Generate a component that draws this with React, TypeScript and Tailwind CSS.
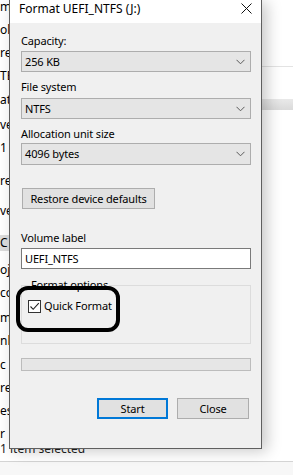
import React from "react";

const font = { fontFamily: '"Noto Sans", "Open Sans", sans-serif' };

function Chevron() {
  return (
    <svg width="9" height="6" viewBox="0 0 9 6" className="shrink-0">
      <polyline points="0.5,0.8 4.5,4.8 8.5,0.8" fill="none" stroke="#5a5a5a" strokeWidth="1" />
    </svg>
  );
}

const txt = "text-[11px] leading-[16px] tracking-[-0.15px] text-black";

function Select({ value, h = "h-[21px]" }: { value: string; h?: string }) {
  return (
    <div className={h + " border border-[#adadad] bg-[#e5e5e5] flex items-center justify-between pl-[3px] pr-[5px]"}>
      <span className={txt}>{value}</span>
      <Chevron />
    </div>
  );
}

function Label({ children, className = "" }: { children: React.ReactNode; className?: string }) {
  return <div className={txt + " h-[16px] " + className}>{children}</div>;
}

const leftRows: { t: string; cls: string; hl?: boolean }[] = [
  { t: "mages", cls: "mt-[-1px]" },
  { t: "olicies", cls: "mt-[7px]" },
  { t: "resources", cls: "mt-[7px]" },
  { t: "TEAM", cls: "mt-[7px]" },
  { t: "ata", cls: "mt-[8px]" },
  { t: "ve", cls: "mt-[9px]" },
  { t: "1", cls: "mt-[7px]" },
  { t: "re", cls: "mt-[17px]" },
  { t: "ve", cls: "mt-[14px]" },
  { t: "C", cls: "mt-[16px]", hl: true },
  { t: "ojects", cls: "mt-[11px]" },
  { t: "co", cls: "mt-[7px]" },
  { t: "m", cls: "mt-[9px]" },
  { t: "nloads", cls: "mt-[7px]" },
  { t: "c", cls: "mt-[8px]" },
  { t: "re", cls: "mt-[7px]" },
  { t: "es", cls: "mt-[7px]" },
  { t: "r", cls: "mt-[7px]" },
];

export default function App() {
  return (
    <div className="relative w-[293px] h-[475px] overflow-hidden bg-white" style={font}>
      {/* Explorer window behind */}
      <div className="flex flex-col w-[293px] h-[475px]">
        <div className="flex flex-1">
          <div className="flex flex-col">
            <div className="w-[9px] overflow-hidden flex flex-col text-[12px] leading-[16px] text-black">
              {leftRows.map((r, i) => (
                <div key={i} className={"h-[16px] whitespace-nowrap " + r.cls + (r.hl ? " bg-[#dcdcdc]" : "")}>
                  {r.t}
                </div>
              ))}
            </div>
            <div className="h-[16px] mt-[-1px] whitespace-nowrap text-[12px] leading-[16px] text-[#222]">1 item selected</div>
          </div>
          <div className="flex-1 flex flex-col">
            <div className="h-[66px]" />
            <div className="h-px bg-[#e3e3e3]" />
            <div className="h-[32px]" />
            <div className="h-[11px] bg-gradient-to-b from-[#e9e9e9] to-[#dadada]" />
            <div className="pl-[252px] text-[12px] leading-[14px] text-[#444]">b</div>
          </div>
        </div>
        <div className="h-px bg-[#d4d4d4]" />
        <div className="h-[13px] bg-[#f7f7f7]" />
      </div>

      {/* Format dialog */}
      <div className="absolute left-[9px] top-0 w-[253px] h-[449px] bg-[#f0f0f0] border-x border-b border-[#5f5f5f] shadow-[5px_2px_14px_rgba(0,0,0,0.22)] flex flex-col">
        <div className="h-[23px] bg-white flex items-start justify-between pl-[9px] pr-[9px] pt-[1px]">
          <span className="text-[12px] leading-[16px] text-black">Format UEFI_NTFS (J:)</span>
          <svg width="11" height="11" viewBox="0 0 11 11" className="mt-[2px]">
            <line x1="0.5" y1="0.5" x2="10.5" y2="10.5" stroke="#111" strokeWidth="1" />
            <line x1="10.5" y1="0.5" x2="0.5" y2="10.5" stroke="#111" strokeWidth="1" />
          </svg>
        </div>
        <div className="flex flex-col pl-[11px] pr-[10px]">
          <Label className="mt-[10px]">Capacity:</Label>
          <div className="mt-[2px]">
            <Select value="256 KB" />
          </div>
          <Label className="mt-[7px]">File system</Label>
          <div className="mt-[3px]">
            <Select value="NTFS" />
          </div>
          <Label className="mt-[7px]">Allocation unit size</Label>
          <div className="mt-[1px]">
            <Select value="4096 bytes" h="h-[22px]" />
          </div>
          <div className="mt-[23px] flex">
            <button className={"h-[21px] w-[133px] ml-[1px] border border-[#adadad] bg-[#e1e1e1] flex items-center justify-center " + txt}>
              Restore device defaults
            </button>
          </div>
          <Label className="mt-[21px]">Volume label</Label>
          <div className={"mt-[2px] h-[21px] border border-[#7a7a7a] bg-white flex items-center pl-[3px] " + txt}>
            UEFI_NTFS
          </div>
          <fieldset className="mt-[8px] h-[67px] border border-[#dcdcdc] pl-[6px] pr-[6px]">
            <legend className={"ml-[2px] px-[1px] " + txt}>Format options</legend>
            <div className="mt-[5px] flex items-center gap-[3px]">
              <div className="w-[13px] h-[13px] border border-[#333] bg-white flex items-center justify-center">
                <svg width="11" height="11" viewBox="0 0 11 11">
                  <polyline points="1.5,5.5 4.2,8.3 9.8,2.2" fill="none" stroke="#222" strokeWidth="1.1" />
                </svg>
              </div>
              <span className={txt}>Quick Format</span>
            </div>
          </fieldset>
          <div className="mt-[14px] h-[13px] border border-[#bcbcbc] bg-[#e6e6e6]" />
          <div className="mt-[27px] flex justify-end gap-[9px] pr-[2px]">
            <button className={"h-[21px] w-[71px] border-2 border-[#0078d7] bg-[#e1e1e1] flex items-center justify-center " + txt}>
              Start
            </button>
            <button className={"h-[21px] w-[72px] border border-[#adadad] bg-[#e1e1e1] flex items-center justify-center " + txt}>
              Close
            </button>
          </div>
        </div>
      </div>

      {/* Hand-drawn annotation */}
      <div className="absolute left-[16px] top-[286px] w-[104px] h-[46px] border-[4px] border-black rounded-[12px]" />
    </div>
  );
}
